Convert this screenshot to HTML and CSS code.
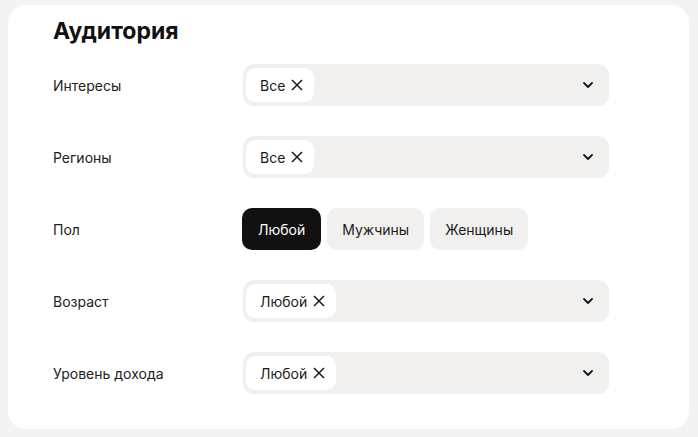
FILE: index.html
```html
<!DOCTYPE html>
<html lang="ru">
<head>
<meta charset="utf-8">
<link rel="stylesheet" href="styles.css">
</head>
<body>
<div class="card">
  <h1 class="title">Аудитория</h1>
  <div class="rows">
    <div class="row">
      <div class="label">Интересы</div>
      <div class="select">
        <span class="chip">Все <svg class="x" viewBox="0 0 12 12"><path d="M1 1L11 11M11 1L1 11"/></svg></span>
        <svg class="chev" viewBox="0 0 10 6"><path d="M1 1L5 5L9 1"/></svg>
      </div>
    </div>
    <div class="row">
      <div class="label">Регионы</div>
      <div class="select">
        <span class="chip">Все <svg class="x" viewBox="0 0 12 12"><path d="M1 1L11 11M11 1L1 11"/></svg></span>
        <svg class="chev" viewBox="0 0 10 6"><path d="M1 1L5 5L9 1"/></svg>
      </div>
    </div>
    <div class="row">
      <div class="label">Пол</div>
      <div class="seg">
        <button class="opt active">Любой</button>
        <button class="opt">Мужчины</button>
        <button class="opt">Женщины</button>
      </div>
    </div>
    <div class="row">
      <div class="label">Возраст</div>
      <div class="select">
        <span class="chip">Любой <svg class="x" viewBox="0 0 12 12"><path d="M1 1L11 11M11 1L1 11"/></svg></span>
        <svg class="chev" viewBox="0 0 10 6"><path d="M1 1L5 5L9 1"/></svg>
      </div>
    </div>
    <div class="row">
      <div class="label">Уровень дохода</div>
      <div class="select">
        <span class="chip">Любой <svg class="x" viewBox="0 0 12 12"><path d="M1 1L11 11M11 1L1 11"/></svg></span>
        <svg class="chev" viewBox="0 0 10 6"><path d="M1 1L5 5L9 1"/></svg>
      </div>
    </div>
  </div>
</div>
</body>
</html>
```
FILE: styles.css
```css
html, body {
  margin: 0;
  padding: 0;
  background: #f3f3f3;
  font-family: Inter, "Noto Sans", sans-serif;
  color: #1c1c1c;
}
body {
  padding: 5px 9px 8px 8px;
  height: 437px;
  box-sizing: border-box;
}
.card {
  background: #ffffff;
  border-radius: 18px;
  height: 424px;
  box-sizing: border-box;
  padding: 11px 80px 0 45px;
}
.title {
  margin: 0;
  font-size: 23px;
  font-weight: 700;
  line-height: 30px;
  letter-spacing: 0;
  color: #111;
}
.rows {
  display: flex;
  flex-direction: column;
  gap: 30px;
  margin-top: 18px;
}
.row {
  display: flex;
  align-items: center;
  height: 42px;
}
.label {
  width: 190px;
  flex: none;
  font-size: 14px;
  color: #222;
}
.select {
  flex: none;
  width: 366px;
  height: 42px;
  background: #f1f0ef;
  border-radius: 11px;
  box-sizing: border-box;
  padding: 4px 16px 4px 3px;
  display: flex;
  align-items: center;
  justify-content: space-between;
}
.chip {
  height: 34px;
  background: #ffffff;
  border-radius: 9px;
  display: flex;
  align-items: center;
  gap: 6px;
  padding: 0 11px 0 14px;
  font-size: 14px;
  color: #1a1a1a;
}
.x {
  width: 12px;
  height: 12px;
  fill: none;
  stroke: #1a1a1a;
  stroke-width: 1.5;
}
.chev {
  width: 10px;
  height: 6px;
  fill: none;
  stroke: #1a1a1a;
  stroke-width: 1.8;
  stroke-linecap: round;
  stroke-linejoin: round;
}
.seg {
  display: flex;
  gap: 6px;
  margin-left: -1px;
}
.opt {
  height: 42px;
  border: none;
  border-radius: 10px;
  background: #f1f0ef;
  font-family: inherit;
  font-size: 14px;
  color: #1c1c1c;
  padding: 0 15px;
}
.opt.active {
  background: #111111;
  color: #ffffff;
  padding: 0 16px;
}
```
